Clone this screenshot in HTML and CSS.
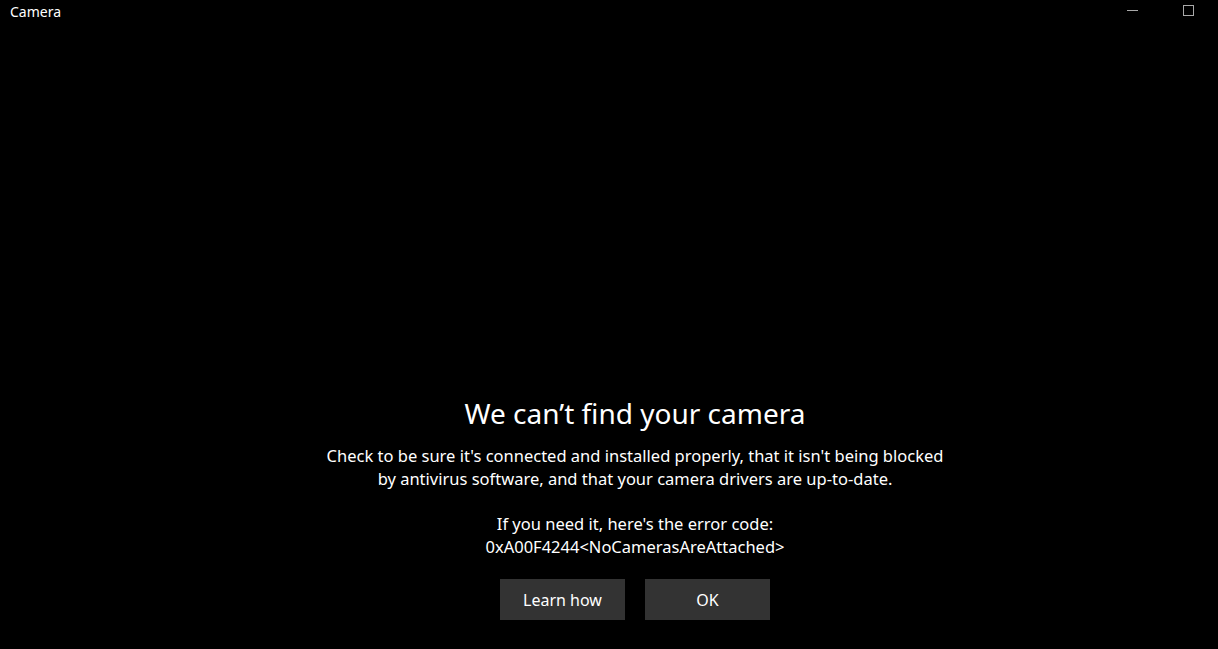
FILE: index.html
```html
<!DOCTYPE html>
<html>
<head>
<meta charset="utf-8">
<link rel="stylesheet" href="styles.css">
</head>
<body>
<div class="window">
  <div class="titlebar">
    <span class="app-title">Camera</span>
    <div class="controls">
      <span class="ctl"><svg width="12" height="12" viewBox="0 0 12 12"><line x1="0" y1="5.5" x2="11" y2="5.5" stroke="#a9a9a9" stroke-width="1"/></svg></span>
      <span class="ctl"><svg width="12" height="12" viewBox="0 0 12 12"><rect x="0.5" y="0.5" width="10" height="10" fill="none" stroke="#a9a9a9" stroke-width="1"/></svg></span>
    </div>
  </div>
  <div class="main">
    <div class="message">
      <h1 class="heading">We can’t find your camera</h1>
      <p class="body">Check to be sure it's connected and installed properly, that it isn't being blocked<br>by antivirus software, and that your camera drivers are up-to-date.</p>
      <p class="body code">If you need it, here's the error code:<br>0xA00F4244&lt;NoCamerasAreAttached&gt;</p>
      <div class="buttons">
        <button class="btn">Learn how</button>
        <button class="btn">OK</button>
      </div>
    </div>
  </div>
</div>
</body>
</html>
```

FILE: styles.css
```css
html, body {
  margin: 0;
  padding: 0;
  background: #000;
  height: 100%;
}
.window {
  height: 649px;
  display: flex;
  flex-direction: column;
  background: #000;
  color: #fff;
  font-family: "Noto Sans", "Open Sans", sans-serif;
}
.titlebar {
  height: 24px;
  display: flex;
  align-items: center;
  justify-content: space-between;
  padding-left: 10px;
}
.app-title {
  font-size: 14px;
  color: #fff;
  margin-top: -1px;
}
.controls {
  display: flex;
  align-items: flex-start;
  height: 24px;
  margin-right: 6px;
}
.ctl {
  width: 46px;
  height: 24px;
  display: flex;
  justify-content: center;
  align-items: center;
}
.ctl svg { display: block; margin-top: -2px; }
.controls .ctl:first-child { margin-right: 10px; }
.main {
  flex: 1;
  display: flex;
  flex-direction: column;
  justify-content: flex-end;
  align-items: center;
  padding-bottom: 29px;
  padding-left: 52px;
}
.message {
  display: flex;
  flex-direction: column;
  align-items: center;
  text-align: center;
}
.heading {
  font-weight: 400;
  font-size: 28px;
  line-height: 36px;
  margin: 0 0 13px 0;
}
.body {
  margin: 0;
  font-size: 16.5px;
  line-height: 23px;
}
.code { margin-top: 22px; }
.buttons {
  display: flex;
  gap: 20px;
  margin-top: 21px;
}
.btn {
  width: 125px;
  height: 41px;
  background: #333333;
  color: #fff;
  border: none;
  font-family: inherit;
  font-size: 16px;
  padding: 0;
}
```
